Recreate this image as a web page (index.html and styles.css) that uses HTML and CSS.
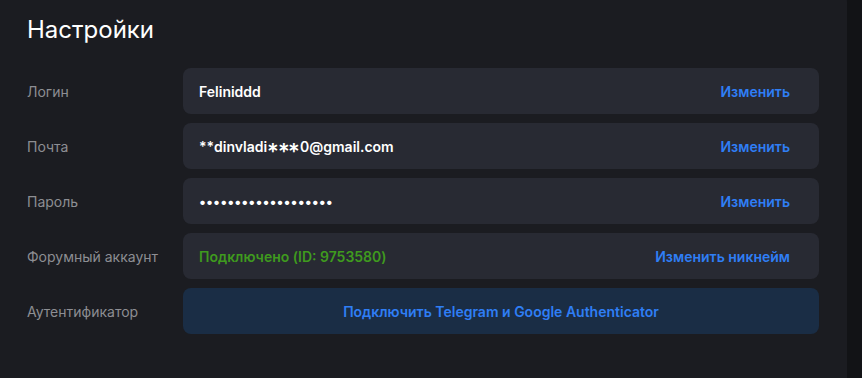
FILE: index.html
```html
<!DOCTYPE html>
<html lang="ru">
<head>
<meta charset="utf-8">
<link rel="stylesheet" href="styles.css">
</head>
<body>
<div class="page">
  <section class="card">
    <h1 class="title">Настройки</h1>
    <div class="rows">
      <div class="label">Логин</div>
      <div class="field"><span class="value">Feliniddd</span><a class="action">Изменить</a></div>
      <div class="label">Почта</div>
      <div class="field"><span class="value">**dinvladi<span class="mask">∗∗∗</span>0@gmail.com</span><a class="action">Изменить</a></div>
      <div class="label">Пароль</div>
      <div class="field"><span class="value dots">•••••••••••••••••••</span><a class="action">Изменить</a></div>
      <div class="label">Форумный аккаунт</div>
      <div class="field"><span class="value ok">Подключено (ID: 9753580)</span><a class="action">Изменить никнейм</a></div>
      <div class="label">Аутентификатор</div>
      <div class="field connect"><a class="action">Подключить Telegram и Google Authenticator</a></div>
    </div>
  </section>
</div>
</body>
</html>
```
FILE: styles.css
```css
html, body {
  margin: 0;
  padding: 0;
  background: #121316;
  height: 100%;
}
body {
  font-family: Inter, "Noto Sans", sans-serif;
  overflow: hidden;
}
.page {
  width: 847px;
}
.card {
  background: #1b1c21;
  margin-top: -12px;
  border-top-right-radius: 14px;
  padding: 26px 28px 60px 27px;
  min-height: 400px;
  box-sizing: border-box;
}
.title {
  margin: 0 0 22px 0;
  font-size: 24px;
  font-weight: 400;
  color: #ffffff;
  line-height: 32px;
}
.rows {
  display: grid;
  grid-template-columns: 156px 636px;
  row-gap: 9px;
}
.label {
  display: flex;
  align-items: center;
  font-size: 14px;
  color: #8d8e93;
  height: 46px;
}
.field {
  height: 46px;
  background: #282a33;
  border-radius: 8px;
  display: flex;
  align-items: center;
  justify-content: space-between;
  padding: 0 29px 0 16px;
  box-sizing: border-box;
}
.value {
  font-size: 14px;
  font-weight: 600;
  color: #ffffff;
}
.mask {
  letter-spacing: -1.4px;
  margin-right: 1px;
}
.value.dots {
  font-size: 14px;
  letter-spacing: 0;
}
.value.ok {
  color: #3f9a1e;
}
.action {
  font-size: 14px;
  font-weight: 600;
  color: #2f7ef5;
  cursor: pointer;
}
.field.connect {
  background: #1a2d45;
  justify-content: center;
  padding: 0;
}
```
